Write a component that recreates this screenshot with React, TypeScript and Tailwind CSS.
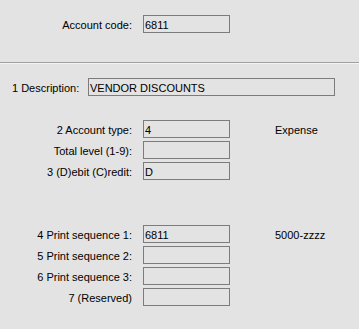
const font = { fontFamily: '"Liberation Sans", Arial, sans-serif' };

function Box({ value = '', w = 'w-[87px]' }: { value?: string; w?: string }) {
  return (
    <div className={`${w} h-[18px] border border-[#7c7c7c] pl-[1px] pt-[1px] leading-[16px] whitespace-nowrap`}>
      {value}
    </div>
  );
}

function Row({ label, value, note }: { label: string; value?: string; note?: string }) {
  return (
    <div className="flex items-center h-[18px]">
      <div className="w-[132px] text-right pt-[2px] leading-[16px] whitespace-nowrap">{label}</div>
      <div className="ml-[11px]">
        <Box value={value} />
      </div>
      {note && <div className="ml-[45px] pt-[2px] leading-[16px]">{note}</div>}
    </div>
  );
}

export default function App() {
  return (
    <div className="w-[359px] h-[329px] bg-[#e3e3e3] text-black text-[11px] overflow-hidden" style={font}>
      <div className="h-[62px] pt-[15px]">
        <Row label="Account code:" value="6811" />
      </div>
      <div className="h-[2px] border-t border-[#a0a0a0] border-b border-b-[#f4f4f4]" />

      <div className="pt-[14px] flex items-center h-[32px]">
        <div className="w-[88px] pl-[12px] pt-[2px] leading-[16px] whitespace-nowrap">1 Description:</div>
        <Box value="VENDOR DISCOUNTS" w="w-[247px]" />
      </div>

      <div className="mt-[24px] flex flex-col gap-[3px]">
        <Row label="2 Account type:" value="4" note="Expense" />
        <Row label="Total level (1-9):" />
        <Row label="3 (D)ebit (C)redit:" value="D" />
      </div>

      <div className="mt-[45px] flex flex-col gap-[3px]">
        <Row label="4 Print sequence 1:" value="6811" note="5000-zzzz" />
        <Row label="5 Print sequence 2:" />
        <Row label="6 Print sequence 3:" />
        <Row label="7 (Reserved)" />
      </div>
    </div>
  );
}
